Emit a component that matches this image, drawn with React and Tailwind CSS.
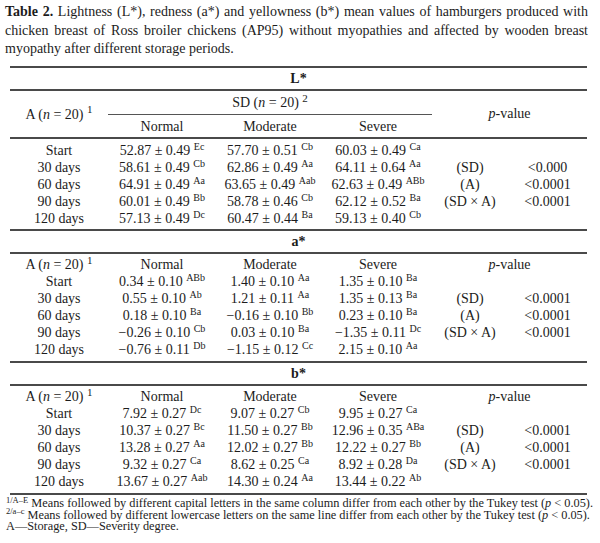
import React from "react";

const COLS = "grid grid-cols-[98px_108px_108px_108px_76px_79px]";

const Rule = () => <div className="h-[2px] bg-[#4a4a4a]" />;

const Val = ({ v, s }) => (
  <div className="h-[17px] leading-[17px] text-center whitespace-nowrap">
    {v} <sup className="text-[10px]">{s}</sup>
  </div>
);

const Cell = ({ children }) => (
  <div className="h-[17px] leading-[17px] text-center whitespace-nowrap">{children}</div>
);

const labels = ["Start", "30 days", "60 days", "90 days", "120 days"];

const Body = ({ rows, pvals }) => (
  <>
    {rows.map((r, i) => (
      <div key={i} className={COLS}>
        <Cell>{labels[i]}</Cell>
        {r.map((c, j) => (
          <Val key={j} v={c[0]} s={c[1]} />
        ))}
        <Cell>{i === 1 ? "(SD)" : i === 2 ? "(A)" : i === 3 ? "(SD × A)" : ""}</Cell>
        <Cell>{i >= 1 && i <= 3 ? pvals[i - 1] : ""}</Cell>
      </div>
    ))}
  </>
);

const ALabel = () => (
  <span>
    A (<i>n</i> = 20) <sup className="text-[11px]">1</sup>
  </span>
);

const PLabel = () => (
  <span>
    <i>p</i>-value
  </span>
);

const SimpleHeader = () => (
  <div className={COLS}>
    <Cell>
      <ALabel />
    </Cell>
    <Cell>Normal</Cell>
    <Cell>Moderate</Cell>
    <Cell>Severe</Cell>
    <div className="col-span-2 h-[17px] leading-[17px] text-center">
      <PLabel />
    </div>
  </div>
);

const SectionTitle = ({ children }) => (
  <div className="h-[21px] flex items-center justify-center font-bold">{children}</div>
);

const L = [
  [["52.87 ± 0.49", "Ec"], ["57.70 ± 0.51", "Cb"], ["60.03 ± 0.49", "Ca"]],
  [["58.61 ± 0.49", "Cb"], ["62.86 ± 0.49", "Aa"], ["64.11 ± 0.64", "Aa"]],
  [["64.91 ± 0.49", "Aa"], ["63.65 ± 0.49", "Aab"], ["62.63 ± 0.49", "ABb"]],
  [["60.01 ± 0.49", "Bb"], ["58.78 ± 0.46", "Cb"], ["62.12 ± 0.52", "Ba"]],
  [["57.13 ± 0.49", "Dc"], ["60.47 ± 0.44", "Ba"], ["59.13 ± 0.40", "Cb"]],
];

const A = [
  [["0.34 ± 0.10", "ABb"], ["1.40 ± 0.10", "Aa"], ["1.35 ± 0.10", "Ba"]],
  [["0.55 ± 0.10", "Ab"], ["1.21 ± 0.11", "Aa"], ["1.35 ± 0.13", "Ba"]],
  [["0.18 ± 0.10", "Ba"], ["−0.16 ± 0.10", "Bb"], ["0.23 ± 0.10", "Ba"]],
  [["−0.26 ± 0.10", "Cb"], ["0.03 ± 0.10", "Ba"], ["−1.35 ± 0.11", "Dc"]],
  [["−0.76 ± 0.11", "Db"], ["−1.15 ± 0.12", "Cc"], ["2.15 ± 0.10", "Aa"]],
];

const B = [
  [["7.92 ± 0.27", "Dc"], ["9.07 ± 0.27", "Cb"], ["9.95 ± 0.27", "Ca"]],
  [["10.37 ± 0.27", "Bc"], ["11.50 ± 0.27", "Bb"], ["12.96 ± 0.35", "ABa"]],
  [["13.28 ± 0.27", "Aa"], ["12.02 ± 0.27", "Bb"], ["12.22 ± 0.27", "Bb"]],
  [["9.32 ± 0.27", "Ca"], ["8.62 ± 0.25", "Ca"], ["8.92 ± 0.28", "Da"]],
  [["13.67 ± 0.27", "Aab"], ["14.30 ± 0.24", "Aa"], ["13.44 ± 0.22", "Ab"]],
];

export default function App() {
  return (
    <div className="w-[600px] h-[543px] bg-white text-[#1c1c1c] overflow-hidden font-['Liberation_Serif',serif]">
      <div className="h-[66px] pt-[3px] pl-[5px] pr-[12px] text-[14px] leading-[18.5px]">
        <div className="text-justify [text-align-last:justify] whitespace-nowrap">
          <b>Table 2.</b> Lightness (L*), redness (a*) and yellowness (b*) mean values of hamburgers produced with
        </div>
        <div className="text-justify [text-align-last:justify] whitespace-nowrap">
          chicken breast of Ross broiler chickens (AP95) without myopathies and affected by wooden breast
        </div>
        <div>myopathy after different storage periods.</div>
      </div>

      <div className="ml-[10px] w-[577px] text-[14px]">
        <Rule />
        <SectionTitle>L*</SectionTitle>
        <Rule />
        <div className="flex h-[46px]">
          <div className="w-[98px] flex items-center justify-center whitespace-nowrap">
            <ALabel />
          </div>
          <div className="w-[324px] flex flex-col">
            <div className="h-[21px] flex items-center justify-center pt-[2px]">
              <span>
                SD (<i>n</i> = 20) <sup className="text-[11px]">2</sup>
              </span>
            </div>
            <div className="h-px bg-[#555] mt-[2px]" />
            <div className="grid grid-cols-3 flex-1 items-center text-center">
              <div>Normal</div>
              <div>Moderate</div>
              <div>Severe</div>
            </div>
          </div>
          <div className="w-[155px] flex items-center justify-center pb-[2px]">
            <PLabel />
          </div>
        </div>
        <Rule />
        <div className="pt-[3px] pb-[2px]">
          <Body rows={L} pvals={["<0.000", "<0.0001", "<0.0001"]} />
        </div>
        <Rule />
        <SectionTitle>a*</SectionTitle>
        <Rule />
        <div className="pt-[2px] pb-[3px]">
          <SimpleHeader />
          <Body rows={A} pvals={["<0.0001", "<0.0001", "<0.0001"]} />
        </div>
        <Rule />
        <SectionTitle>b*</SectionTitle>
        <Rule />
        <div className="pt-[2px] pb-[3px]">
          <SimpleHeader />
          <Body rows={B} pvals={["<0.0001", "<0.0001", "<0.0001"]} />
        </div>
        <Rule />
      </div>

      <div className="pl-[6px] pt-[3px] text-[12.3px] leading-[11.5px] whitespace-nowrap">
        <div>
          <sup className="text-[8.5px]">1/A–E</sup> Means followed by different capital letters in the same column differ from each other by the Tukey test (<i>p</i> &lt; 0.05).
        </div>
        <div>
          <sup className="text-[8.5px]">2/a–c</sup> Means followed by different lowercase letters on the same line differ from each other by the Tukey test (<i>p</i> &lt; 0.05).
        </div>
        <div>A—Storage, SD—Severity degree.</div>
      </div>
    </div>
  );
}
